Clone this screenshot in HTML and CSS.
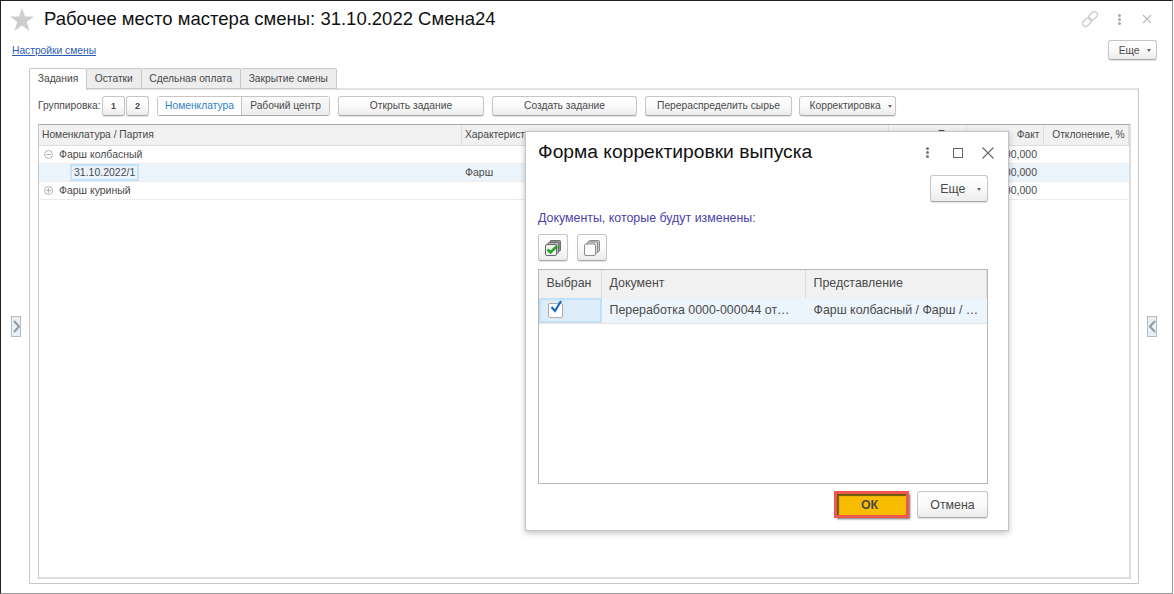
FILE: index.html
```html
<!DOCTYPE html>
<html lang="ru">
<head>
    <meta charset="UTF-8">
    <title>Рабочее место мастера смены</title>
    <link rel="stylesheet" href="styles.css">
</head>
<body>

<div class="window">
    <header class="title-bar">
        <svg class="star" width="24" height="23" viewBox="0 0 24 23"><polygon points="12,0 15,8.5 24,8.5 16.8,14 19.5,23 12,17.5 4.500,23 7.200,14 0,8.500 9,8.500" fill="#cdcdcd"/></svg>
        <h1>Рабочее место мастера смены: 31.10.2022 Смена24</h1>
        <div class="title-icons">
            <svg class="link-icon" width="18" height="18" viewBox="0 0 18 18" fill="none" stroke="#c8c8c8" stroke-width="1.200"><rect x="9" y="1" width="6" height="10" rx="3" transform="rotate(45 12 6)"/><rect x="3" y="7" width="6" height="10" rx="3" transform="rotate(45 6 12)"/></svg>
            <span class="kebab"><i></i><i></i><i></i></span>
            <svg class="close-icon" width="10" height="10" viewBox="0 0 10 10" stroke="#bbb" stroke-width="1.100"><path d="M1 1l8 8M9 1l-8 8"/></svg>
        </div>
    </header>

    <div class="link-row">
        <a class="link" href="#">Настройки смены</a>
        <button class="btn more-btn">Еще <span class="caret"></span></button>
    </div>

    <div class="tabs">
        <div class="tab active">Задания</div>
        <div class="tab">Остатки</div>
        <div class="tab">Сдельная оплата</div>
        <div class="tab">Закрытие смены</div>
    </div>

    <div class="panel">
        <div class="toolbar">
            <span class="toolbar-label">Группировка:</span>
            <div class="pair">
                <button class="btn num">1</button>
                <button class="btn num">2</button>
            </div>
            <div class="switch">
                <div class="switch-on">Номенклатура</div>
                <div class="switch-off">Рабочий центр</div>
            </div>
            <button class="btn w-open">Открыть задание</button>
            <button class="btn w-create">Создать задание</button>
            <button class="btn w-move">Перераспределить сырье</button>
            <button class="btn w-fix">Корректировка <span class="caret"></span></button>
        </div>

        <div class="grid">
            <div class="grid-row grid-head">
                <div>Номенклатура / Партия</div>
                <div>Характеристика</div>
                <div class="num-cell">План</div>
                <div class="num-cell">Факт</div>
                <div class="num-cell">Отклонение, %</div>
            </div>
            <div class="grid-row">
                <div class="tree">
                    <svg class="tree-icon" width="9" height="9" viewBox="0 0 9 9" fill="none" stroke="#b0b0b0"><circle cx="4.500" cy="4.500" r="4"/><path d="M2 4.500h5"/></svg>
                    Фарш колбасный
                </div>
                <div></div>
                <div></div>
                <div class="num-cell">100,000</div>
                <div></div>
            </div>
            <div class="grid-row selected">
                <div class="tree-child"><span class="current-cell">31.10.2022/1</span></div>
                <div>Фарш</div>
                <div></div>
                <div class="num-cell">100,000</div>
                <div></div>
            </div>
            <div class="grid-row">
                <div class="tree">
                    <svg class="tree-icon" width="9" height="9" viewBox="0 0 9 9" fill="none" stroke="#b0b0b0"><circle cx="4.500" cy="4.500" r="4"/><path d="M2 4.500h5M4.500 2v5"/></svg>
                    Фарш куриный
                </div>
                <div></div>
                <div></div>
                <div class="num-cell">100,000</div>
                <div></div>
            </div>
        </div>
    </div>

    <div class="side-arrow side-left">
        <svg width="7" height="13" viewBox="0 0 7 13" fill="none" stroke="#999" stroke-width="2"><path d="M1 1l5 5.500-5 5.500"/></svg>
    </div>
    <div class="side-arrow side-right">
        <svg width="7" height="13" viewBox="0 0 7 13" fill="none" stroke="#999" stroke-width="2"><path d="M6 1l-5 5.500 5 5.500"/></svg>
    </div>

    <div class="dialog">
        <div class="dialog-head">
            <h2>Форма корректировки выпуска</h2>
            <div class="dialog-icons">
                <span class="kebab dark"><i></i><i></i><i></i></span>
                <span class="maximize"></span>
                <svg class="dialog-close" width="12" height="12" viewBox="0 0 12 12" stroke="#666" stroke-width="1.100"><path d="M.5.5l11 11M11.500.5l-11 11"/></svg>
            </div>
        </div>
        <div class="dialog-more">
            <button class="btn big-more">Еще <span class="caret"></span></button>
        </div>
        <div class="docs-label">Документы, которые будут изменены:</div>
        <div class="docs-tools">
            <button class="btn icon-btn">
                <svg width="18" height="18" viewBox="0 0 18 18"><rect x="6" y="1.500" width="10.500" height="10.500" rx="1" fill="#8a8f8a" stroke="#6c706c"/><rect x="4" y="3.500" width="10.500" height="10.500" rx="1" fill="#b9bdb9" stroke="#6c706c"/><rect x="1.500" y="5.500" width="11" height="11" rx="1.500" fill="#f2f2f2" stroke="#666"/><path d="M3.500 10.500l3 3 6.500-6.500" fill="none" stroke="#24a524" stroke-width="2.600"/></svg>
            </button>
            <button class="btn icon-btn">
                <svg width="18" height="18" viewBox="0 0 18 18" stroke="#8a8a8a"><rect x="6" y="1.500" width="10.500" height="11" rx="1" fill="#c8c8c8"/><rect x="4" y="3" width="10.500" height="11" rx="1" fill="#dedede"/><rect x="1.500" y="5" width="11" height="11.500" rx="1.500" fill="#fff"/></svg>
            </button>
        </div>
        <div class="docs">
            <div class="docs-row docs-head">
                <div>Выбран</div>
                <div>Документ</div>
                <div>Представление</div>
            </div>
            <div class="docs-row docs-selected">
                <div class="check-cell">
                    <span class="check">
                        <svg width="15" height="15" viewBox="0 0 15 15" fill="none" stroke="#1f66b8" stroke-width="2.200"><path d="M2.500 7l3.500 4 6-10"/></svg>
                    </span>
                </div>
                <div class="cut">Переработка 0000-000044 от…</div>
                <div class="cut">Фарш колбасный / Фарш / …</div>
            </div>
        </div>
        <div class="dialog-foot">
            <button class="ok-btn">ОК</button>
            <button class="btn cancel-btn">Отмена</button>
        </div>
    </div>
</div>

</body>
</html>
```

FILE: styles.css
```css
* {
    box-sizing: border-box;
}
html, body {
    margin: 0;
    padding: 0;
    background: #fff;
}
body {
    font-family: "Liberation Sans", Arial, sans-serif;
    color: #4a4a4a;
    font-size: 10.25px;
}
.window {
    position: relative;
    width: 1173px;
    height: 594px;
    border-top: 1px solid #222;
    border-left: 1px solid #222;
    border-right: 1px solid #999;
    border-bottom: 1px solid #999;
    overflow: hidden;
}

/* title */
.title-bar {
    display: flex;
    align-items: center;
    height: 36px;
    padding: 0 0 0 9px;
}
.star {
    flex: none;
}
h1 {
    margin: 0 0 0 10px;
    font-size: 18.5px;
    font-weight: normal;
    color: #111;
    flex: 1;
}
.title-icons {
    display: flex;
    align-items: center;
    width: 93px;
    padding-left: 2px;
}
.close-icon {
    margin-left: 21px;
}
.kebab {
    display: inline-flex;
    flex-direction: column;
    gap: 1px;
    margin-left: 19px;
}
.kebab i {
    display: block;
    width: 3px;
    height: 3px;
    border-radius: 50%;
    background: #aaa;
}
.kebab.dark {
    margin-left: 0;
}
.kebab.dark i {
    background: #777;
}

.link-row {
    display: flex;
    justify-content: space-between;
    align-items: center;
    height: 25px;
    padding: 1px 15px 0 11px;
}
.link {
    color: #2a5db0;
}

/* buttons */
.btn {
    font-family: inherit;
    font-size: 10.25px;
    color: #4a4a4a;
    height: 20px;
    padding: 0;
    background: linear-gradient(to bottom, #fff, #fafafa 50%, #ececec);
    border: 1px solid #c6c6c6;
    border-bottom-color: #a8a8a8;
    border-radius: 3px;
    box-shadow: 0 1px 1px rgba(0, 0, 0, 0.12);
}
.caret {
    display: inline-block;
    width: 0;
    height: 0;
    margin-left: 5px;
    vertical-align: middle;
    border-left: 2px solid transparent;
    border-right: 2px solid transparent;
    border-top: 3px solid #666;
}
.more-btn {
    width: 49px;
    height: 20px;
    padding-left: 5px;
}

/* tabs */
.tabs {
    display: flex;
    margin: 6px 0 0 28px;
    height: 22px;
    position: relative;
    z-index: 1;
}
.tab {
    height: 21px;
    line-height: 20px;
    padding: 0 7.75px;
    background: #ededed;
    border: 1px solid #c8c8c8;
    border-left: none;
    border-radius: 2px 2px 0 0;
}
.tab.active {
    height: 22px;
    background: #fff;
    border-left: 1px solid #c8c8c8;
    border-bottom: none;
}
.panel {
    margin: -2px 0 0 28px;
    width: 1110px;
    height: 496px;
    border: 1px solid #c8c8c8;
    border-top: 2px solid #e2e2e2;
    padding: 5px 7px 0 8px;
}
.toolbar {
    display: flex;
    align-items: center;
    height: 21px;
}
.toolbar-label {
    width: 64px;
}
.pair {
    display: flex;
    gap: 1px;
    margin-right: 8px;
}
.num {
    width: 23px;
    font-weight: bold;
    font-size: 9px;
}
.switch {
    display: flex;
    width: 173px;
    height: 20px;
    line-height: 18px;
    border: 1px solid #c6c6c6;
    border-bottom-color: #a8a8a8;
    border-radius: 3px;
    margin-right: 8px;
    text-align: center;
}
.switch-on {
    width: 83px;
    color: #2f7fc4;
    background: #fff;
}
.switch-off {
    flex: 1;
    background: linear-gradient(to bottom, #fafafa, #ececec);
    border-left: 1px solid #c6c6c6;
}
.w-open {
    width: 146px;
    margin-right: 8px;
}
.w-create {
    width: 145px;
    margin-right: 8px;
}
.w-move {
    width: 147px;
    margin-right: 7px;
}
.w-fix {
    width: 97px;
    padding-left: 7px;
}

/* main table */
.grid {
    margin-top: 8px;
    height: 455px;
    border: 1px solid #c8c8c8;
    border-top-color: #aaa;
    border-bottom: 2px solid #dcdcdc;
    border-right: 2px solid #dcdcdc;
}
.grid-row {
    display: grid;
    grid-template-columns: 423px 427px 78px 77px 1fr;
    height: 18px;
    line-height: 17px;
    font-size: 10.5px;
    border-bottom: 1px solid #ececec;
}
.grid-row > div {
    padding: 0 3px;
    white-space: nowrap;
    overflow: hidden;
}
.grid-head {
    height: 21px;
    line-height: 19px;
    font-size: 10.25px;
    background: #f1f1f1;
    border-bottom: 1px solid #ddd;
}
.grid-head > div {
    border-right: 1px solid #ddd;
}
.num-cell {
    text-align: right;
}
.grid-row > .num-cell {
    padding-right: 7px;
}
.grid-head > .num-cell {
    padding-right: 3.5px;
}
.selected {
    background: #edf5fc;
}
.grid-row > .tree {
    padding-left: 5px;
}
.tree-icon {
    margin-right: 3px;
    vertical-align: -1px;
}
.grid-row > .tree-child {
    padding-left: 31px;
}
.current-cell {
    display: inline-block;
    height: 17px;
    line-height: 13px;
    padding: 0 2px;
    background: #e8f3fc;
    border: 2px solid #c6e2f8;
}

/* side arrows */
.side-arrow {
    position: absolute;
    top: 315px;
    width: 10px;
    height: 21px;
    display: flex;
    align-items: center;
    justify-content: center;
    background: #e6f0fa;
    border: 1px solid #bbb;
}
.side-left {
    left: 10px;
}
.side-right {
    left: 1146px;
}

/* dialog */
.dialog {
    position: absolute;
    left: 524px;
    top: 130px;
    width: 484px;
    height: 400px;
    padding: 0 20px 0 12px;
    background: #fff;
    border: 1px solid #c4c4c4;
    box-shadow: 0 2px 6px rgba(0, 0, 0, 0.25);
    font-size: 12.4px;
}
.dialog-head {
    display: flex;
    align-items: center;
    justify-content: space-between;
    height: 41px;
}
h2 {
    margin: 0 0 2px;
    font-size: 19.25px;
    font-weight: normal;
    color: #111;
}
.dialog-icons {
    display: flex;
    align-items: center;
    margin-right: -6px;
}
.maximize {
    display: block;
    width: 10px;
    height: 10px;
    margin-left: 24px;
    border: 1px solid #666;
}
.dialog-close {
    margin-left: 19px;
}
.dialog-more {
    display: flex;
    justify-content: flex-end;
    margin-top: 2px;
}
.big-more {
    width: 58px;
    height: 27px;
    padding-left: 3px;
    font-size: 12.4px;
}
.big-more .caret {
    margin-left: 8px;
}
.docs-label {
    margin-top: 9px;
    color: #4b3fa8;
    height: 14px;
    line-height: 14px;
}
.docs-tools {
    display: flex;
    gap: 9px;
    margin-top: 9px;
}
.icon-btn {
    width: 30px;
    height: 27px;
    display: flex;
    align-items: center;
    justify-content: center;
}
.docs {
    margin-top: 8px;
    height: 215px;
    border: 1px solid #b8b8b8;
}
.docs-row {
    display: grid;
    grid-template-columns: 63px 204px 1fr;
}
.docs-row > div {
    padding: 0 6px 0 7.5px;
    white-space: nowrap;
    overflow: hidden;
}
.docs-head {
    height: 28px;
    line-height: 27px;
    background: #f1f1f1;
}
.docs-head > div {
    border-right: 1px solid #ddd;
}
.docs-selected {
    height: 26px;
    line-height: 25px;
    background: #edf5fc;
    border-bottom: 1px solid #e4e4e4;
}
.docs-row > .check-cell {
    padding: 1px 0 1px 1px;
}
.check-cell {
    background: #dcecf9;
    border: 2px solid #c2e1f8;
}
.check {
    display: block;
    position: relative;
    width: 15px;
    height: 15px;
    margin: 2px 0 0 6px;
    background: #fff;
    border: 1px solid #aaa;
    border-radius: 2px;
}
.check svg {
    position: absolute;
    left: 0;
    top: -4px;
}
.dialog-foot {
    display: flex;
    justify-content: flex-end;
    align-items: center;
    margin-top: 7px;
    gap: 9px;
}
.ok-btn {
    width: 73px;
    height: 25px;
    font-family: inherit;
    font-size: 12.4px;
    font-weight: bold;
    color: #4a4a4a;
    background: #f8bd00;
    border: 2px solid #f0574a;
    outline: 1px solid #f0574a;
    box-shadow: inset 2px 2px 1px #6b5a10, 2px 2px 2px rgba(0, 0, 0, 0.6);
    padding: 0 4px 0 0;
}
.cancel-btn {
    width: 71px;
    height: 27px;
    font-size: 12.4px;
}
```
